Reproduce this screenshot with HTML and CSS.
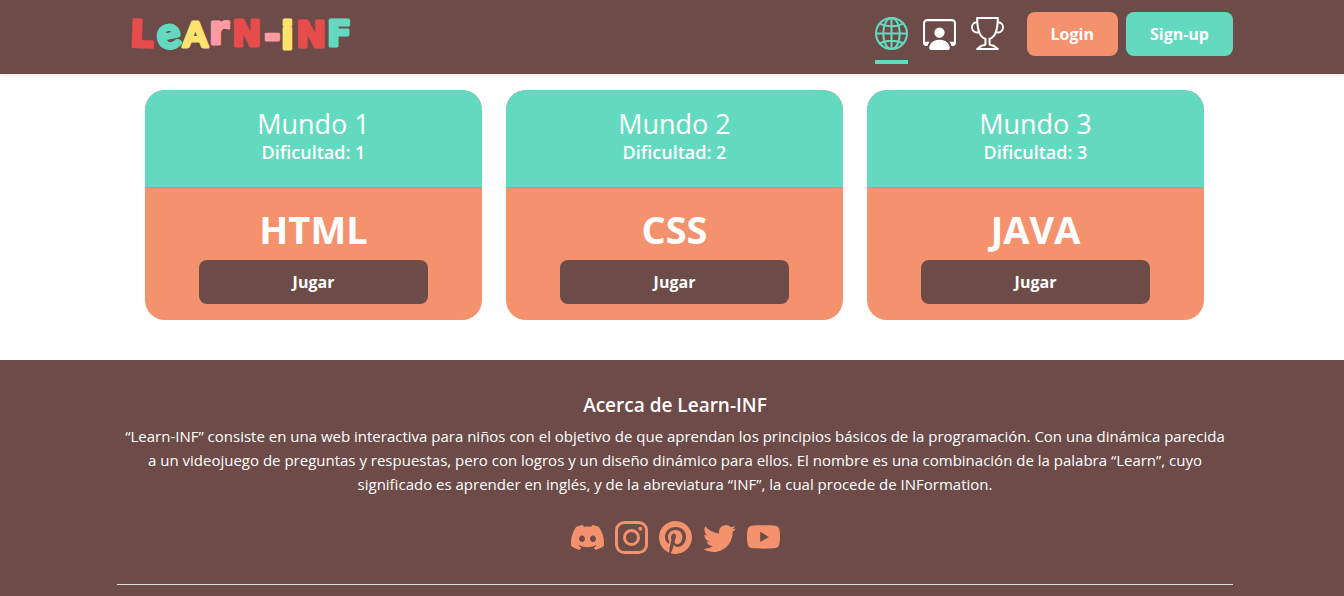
FILE: index.html
```html
<!DOCTYPE html>
<html lang="es">
<head>
<meta charset="utf-8">
<meta name="viewport" content="width=device-width, initial-scale=1">
<title>Learn-INF</title>
<link rel="stylesheet" href="styles.css">
</head>
<body>
<header class="navbar">
  <div class="container navbar-row">
    <a class="brand" href="#" aria-label="Learn-INF">
      <svg class="brand-logo" width="232" height="74" viewBox="0 0 232 74">
        <g class="brand-text">
          <text class="red" x="3" y="47" font-size="37" transform="rotate(2 16 34)">L</text>
          <text class="teal round" x="30" y="48" font-size="44" transform="rotate(-12 43 36)">e</text>
          <text class="yellow round" x="56" y="47" font-size="35">A</text>
          <text class="pink" x="82" y="44" font-size="40">r</text>
          <text class="red" x="105" y="46" font-size="35">N</text>
          <text class="pink" x="137" y="49" font-size="40">-</text>
          <text class="yellow" x="154" y="49" font-size="37">i</text>
          <text class="red" x="169" y="47" font-size="36">N</text>
          <text class="teal" x="200" y="46" font-size="36">F</text>
        </g>
      </svg>
    </a>
    <nav class="nav">
      <a class="nav-link active" href="#" aria-label="Mundos">
        <svg class="icon" viewBox="0 0 16 16"><g fill="none" stroke="currentColor"><circle cx="8" cy="8" r="7.5"/><ellipse cx="8" cy="8" rx="4" ry="7.5"/><path d="M8 .5v15M.5 8h15M2.4 3.2C5.5 4.9 10.5 4.9 13.6 3.2M2.4 12.8c3.100-1.700 8.100-1.700 11.200 0"/></g></svg>
      </a>
      <a class="nav-link" href="#" aria-label="Perfil">
        <svg class="icon" viewBox="0 0 16 16"><path d="M4 16s-1 0-1-1 1-4 5-4 5 3 5 4-1 1-1 1H4Zm4-5.950a2.500 2.500 0 1 0 0-5 2.500 2.500 0 0 0 0 5Z"/><path d="M2 1a2 2 0 0 0-2 2v9.500A1.500 1.500 0 0 0 1.500 14h.653a5.373 5.373 0 0 1 1.066-2H1V3a1 1 0 0 1 1-1h12a1 1 0 0 1 1 1v9h-2.219c.554.654.890 1.373 1.066 2h.653a1.500 1.500 0 0 0 1.500-1.500V3a2 2 0 0 0-2-2H2Z"/></svg>
      </a>
      <a class="nav-link" href="#" aria-label="Logros">
        <svg class="icon" viewBox="0 0 16 16"><path d="M2.5.5A.5.5 0 0 1 3 0h10a.5.5 0 0 1 .5.5c0 .538-.012 1.05-.034 1.536a3 3 0 1 1-1.133 5.89c-.79 1.865-1.878 2.777-2.833 3.011v2.173l1.425.356c.194.048.377.135.537.255L13.3 15.1a.5.5 0 0 1-.3.9H3a.5.5 0 0 1-.3-.9l1.838-1.379c.16-.12.343-.207.537-.255L6.5 13.11v-2.173c-.955-.234-2.043-1.146-2.833-3.012a3 3 0 1 1-1.132-5.89A33.076 33.076 0 0 1 2.5.5zm.099 2.54a2 2 0 0 0 .72 3.935c-.333-1.05-.588-2.346-.72-3.935zm10.083 3.935a2 2 0 0 0 .72-3.935c-.133 1.59-.388 2.885-.72 3.935zM3.504 1c.007.517.026 1.006.056 1.469.13 2.028.457 3.546.87 4.667C5.294 9.48 6.484 10 7 10a.5.5 0 0 1 .5.5v2.61a1 1 0 0 1-.757.97l-1.426.356a.5.5 0 0 0-.179.085L4.5 15h7l-.638-.479a.501.501 0 0 0-.18-.085l-1.425-.356a1 1 0 0 1-.757-.97V10.5A.5.5 0 0 1 9 10c.516 0 1.706-.52 2.57-2.864.413-1.12.74-2.64.87-4.667.03-.463.049-.952.056-1.469H3.504z"/></svg>
      </a>
    </nav>
    <div class="actions">
      <button class="btn btn-orange" type="button">Login</button>
      <button class="btn btn-teal" type="button">Sign-up</button>
    </div>
  </div>
</header>

<main class="worlds">
  <div class="world-grid">
    <article class="card">
      <div class="card-header">
        <h2 class="card-title">Mundo 1</h2>
        <p class="card-level">Dificultad: 1</p>
      </div>
      <div class="card-body">
        <h3 class="card-topic">HTML</h3>
        <button class="btn btn-brown" type="button">Jugar</button>
      </div>
    </article>
    <article class="card">
      <div class="card-header">
        <h2 class="card-title">Mundo 2</h2>
        <p class="card-level">Dificultad: 2</p>
      </div>
      <div class="card-body">
        <h3 class="card-topic">CSS</h3>
        <button class="btn btn-brown" type="button">Jugar</button>
      </div>
    </article>
    <article class="card">
      <div class="card-header">
        <h2 class="card-title">Mundo 3</h2>
        <p class="card-level">Dificultad: 3</p>
      </div>
      <div class="card-body">
        <h3 class="card-topic">JAVA</h3>
        <button class="btn btn-brown" type="button">Jugar</button>
      </div>
    </article>
  </div>
</main>

<footer class="footer">
  <div class="container">
    <h4 class="footer-title">Acerca de Learn-INF</h4>
    <p class="footer-text">“Learn-INF” consiste en una web interactiva para niños con el objetivo de que aprendan los principios básicos de la programación. Con una dinámica parecida a&nbsp;un videojuego de preguntas y respuestas, pero con logros y un diseño dinámico para ellos. El nombre es una combinación de la palabra “Learn”, cuyo significado es aprender en inglés, y de la abreviatura “INF”, la cual procede de INFormation.</p>
    <div class="social">
      <a href="#" aria-label="Discord"><svg class="icon" viewBox="0 0 16 16"><path d="M13.545 2.907a13.227 13.227 0 0 0-3.257-1.011.05.05 0 0 0-.052.025c-.141.25-.297.577-.406.833a12.19 12.19 0 0 0-3.658 0 8.258 8.258 0 0 0-.412-.833.051.051 0 0 0-.052-.025c-1.125.194-2.22.534-3.257 1.011a.041.041 0 0 0-.021.018C.356 6.024-.213 9.047.066 12.032c.001.014.01.028.021.037a13.276 13.276 0 0 0 3.995 2.02.05.05 0 0 0 .056-.019c.308-.42.582-.863.818-1.329a.05.05 0 0 0-.01-.059.051.051 0 0 0-.018-.011 8.875 8.875 0 0 1-1.248-.595.05.05 0 0 1-.02-.066.051.051 0 0 1 .015-.019c.084-.063.168-.129.248-.195a.05.05 0 0 1 .051-.007c2.619 1.196 5.454 1.196 8.041 0a.052.052 0 0 1 .053.007c.08.066.164.132.248.195a.051.051 0 0 1-.004.085 8.254 8.254 0 0 1-1.249.594.05.05 0 0 0-.03.03.052.052 0 0 0 .003.041c.24.465.515.909.817 1.329a.05.05 0 0 0 .056.019 13.235 13.235 0 0 0 4.001-2.02.049.049 0 0 0 .021-.037c.334-3.451-.559-6.449-2.366-9.106a.034.034 0 0 0-.02-.019Zm-8.198 7.307c-.789 0-1.438-.724-1.438-1.612 0-.889.637-1.613 1.438-1.613.807 0 1.45.73 1.438 1.613 0 .888-.637 1.612-1.438 1.612Zm5.316 0c-.788 0-1.438-.724-1.438-1.612 0-.889.637-1.613 1.438-1.613.807 0 1.451.73 1.438 1.613 0 .888-.631 1.612-1.438 1.612Z"/></svg></a>
      <a href="#" aria-label="Instagram"><svg class="icon" viewBox="0 0 16 16"><rect x=".72" y=".72" width="14.56" height="14.56" rx="3.8" fill="none" stroke="currentColor" stroke-width="1.44"/><circle cx="8" cy="8" r="3.39" fill="none" stroke="currentColor" stroke-width="1.44"/><circle cx="12.27" cy="3.73" r=".96"/></svg></a>
      <a href="#" aria-label="Pinterest"><svg class="icon" viewBox="0 0 16 16"><path d="M8 0a8 8 0 0 0-2.915 15.452c-.07-.633-.134-1.606.027-2.297.146-.625.938-3.977.938-3.977s-.239-.479-.239-1.187c0-1.113.645-1.943 1.448-1.943.682 0 1.012.512 1.012 1.127 0 .686-.437 1.712-.663 2.663-.188.796.4 1.446 1.185 1.446 1.422 0 2.515-1.5 2.515-3.664 0-1.915-1.377-3.254-3.342-3.254-2.276 0-3.612 1.707-3.612 3.471 0 .688.265 1.425.595 1.826a.24.24 0 0 1 .056.23c-.061.252-.196.796-.222.907-.035.146-.116.177-.268.107-1-.465-1.624-1.926-1.624-3.1 0-2.523 1.834-4.84 5.286-4.84 2.775 0 4.932 1.977 4.932 4.62 0 2.757-1.739 4.976-4.151 4.976-.811 0-1.573-.421-1.834-.919l-.498 1.902c-.181.695-.669 1.566-.995 2.097A8 8 0 1 0 8 0z"/></svg></a>
      <a href="#" aria-label="Twitter"><svg class="icon" viewBox="0 0 16 16"><path d="M5.026 15c6.038 0 9.341-5.003 9.341-9.334 0-.14 0-.282-.006-.422A6.685 6.685 0 0 0 16 3.542a6.658 6.658 0 0 1-1.889.518 3.301 3.301 0 0 0 1.447-1.817 6.533 6.533 0 0 1-2.087.793A3.286 3.286 0 0 0 7.875 6.03a9.325 9.325 0 0 1-6.767-3.429 3.289 3.289 0 0 0 1.018 4.382A3.323 3.323 0 0 1 .64 6.575v.045a3.288 3.288 0 0 0 2.632 3.218 3.203 3.203 0 0 1-.865.115 3.23 3.23 0 0 1-.614-.057 3.283 3.283 0 0 0 3.067 2.277A6.588 6.588 0 0 1 .78 13.58a6.32 6.32 0 0 1-.78-.045A9.344 9.344 0 0 0 5.026 15z"/></svg></a>
      <a href="#" aria-label="YouTube"><svg class="icon" viewBox="0 0 16 16"><path fill-rule="evenodd" d="M8 2c2 0 4.600.050 5.900.300a2 2 0 0 1 1.700 1.500c.300 1.100.400 2.500.400 3.800s-.100 2.800-.400 3.900a2 2 0 0 1-1.700 1.600C12.600 13.300 10 13.400 8 13.400s-4.600-.100-5.900-.300a2 2 0 0 1-1.700-1.600C.100 10.400 0 9 0 7.700s.100-2.800.400-3.900a2 2 0 0 1 1.700-1.500C3.400 2.050 6 2 8 2ZM6.400 5.200v5l4.200-2.500Z"/></svg></a>
    </div>
    <hr class="rule">
  </div>
</footer>
</body>
</html>
```
FILE: styles.css
```css
:root {
  --brown: #6d4b48;
  --teal: #63dabf;
  --orange: #f5926e;
}

* {
  box-sizing: border-box;
}

body {
  margin: 0;
  min-height: 100vh;
  display: flex;
  flex-direction: column;
  background: #fff;
  color: #fff;
  font: 15px/24px "Open Sans", "Noto Sans", sans-serif;
}

h2, h3, h4, p {
  margin: 0;
}

.container {
  max-width: 1116px;
  margin: 0 auto;
}

.navbar, .footer {
  padding-left: 6px;
  background: var(--brown);
}

.navbar {
  box-shadow: 0 2px 4px rgba(0, 0, 0, 0.08);
}

.navbar-row {
  display: flex;
  align-items: flex-start;
  padding-left: 10px;
}

.brand {
  margin-right: auto;
}

.brand-logo {
  display: block;
}

.brand-text {
  font-family: "DejaVu Sans", sans-serif;
  font-weight: 700;
  stroke-width: 3;
  stroke-linejoin: round;
}

.brand-text .round {
  font-family: "Lato", sans-serif;
  font-weight: 900;
}

.red { fill: #e64c4c; stroke: #e64c4c; }
.teal { fill: #63dabf; stroke: #63dabf; }
.yellow { fill: #ffe36e; stroke: #ffe36e; }
.pink { fill: #ff9aa2; stroke: #ff9aa2; }

.nav {
  display: flex;
  gap: 15px;
  margin-right: 23px;
}

.nav-link {
  padding: 17px 0 10px;
  border-bottom: 4px solid transparent;
  color: #fff;
}

.nav-link.active {
  color: var(--teal);
  border-color: var(--teal);
}

.icon {
  display: block;
  width: 33px;
  height: 33px;
  fill: currentColor;
}

.actions {
  display: flex;
  gap: 8px;
  padding-top: 12px;
}

.btn {
  border: 0;
  border-radius: 8px;
  padding: 10px 24px;
  color: #fff;
  font: 700 16px/24px "Open Sans", "Noto Sans", sans-serif;
  cursor: pointer;
}

.btn-orange { background: var(--orange); }
.btn-teal { background: var(--teal); }
.btn-brown { background: var(--brown); width: 75%; }

.worlds {
  padding: 16px 0 40px 5px;
}

.world-grid {
  display: grid;
  grid-template-columns: repeat(3, 1fr);
  gap: 24px;
  max-width: 1059px;
  margin: 0 auto;
}

.card {
  border-radius: 20px;
  overflow: hidden;
  background: var(--orange);
  text-align: center;
}

.card-header {
  padding: 20px 16px 21px;
  background: var(--teal);
  border-bottom: 1px solid #59c4ac;
}

.card-title {
  font-size: 27px;
  line-height: 28px;
  font-weight: 400;
}

.card-level {
  font-size: 18px;
  line-height: 28px;
  font-weight: 600;
}

.card-body {
  padding: 16px;
}

.card-topic {
  margin-bottom: 6px;
  font-size: 38px;
  line-height: 50px;
  font-weight: 700;
}

.footer {
  flex-grow: 1;
  padding-top: 32px;
  text-align: center;
}

.footer-title {
  font-size: 19px;
  line-height: 24px;
  font-weight: 600;
  padding: 1px 0 7px;
}

.social {
  display: flex;
  justify-content: center;
  gap: 11px;
  margin-top: 25px;
  color: var(--orange);
}

.social a {
  color: inherit;
}

.rule {
  margin: 30px 0 11px;
  border: 0;
  border-top: 1px solid #e2dbda;
}
```
